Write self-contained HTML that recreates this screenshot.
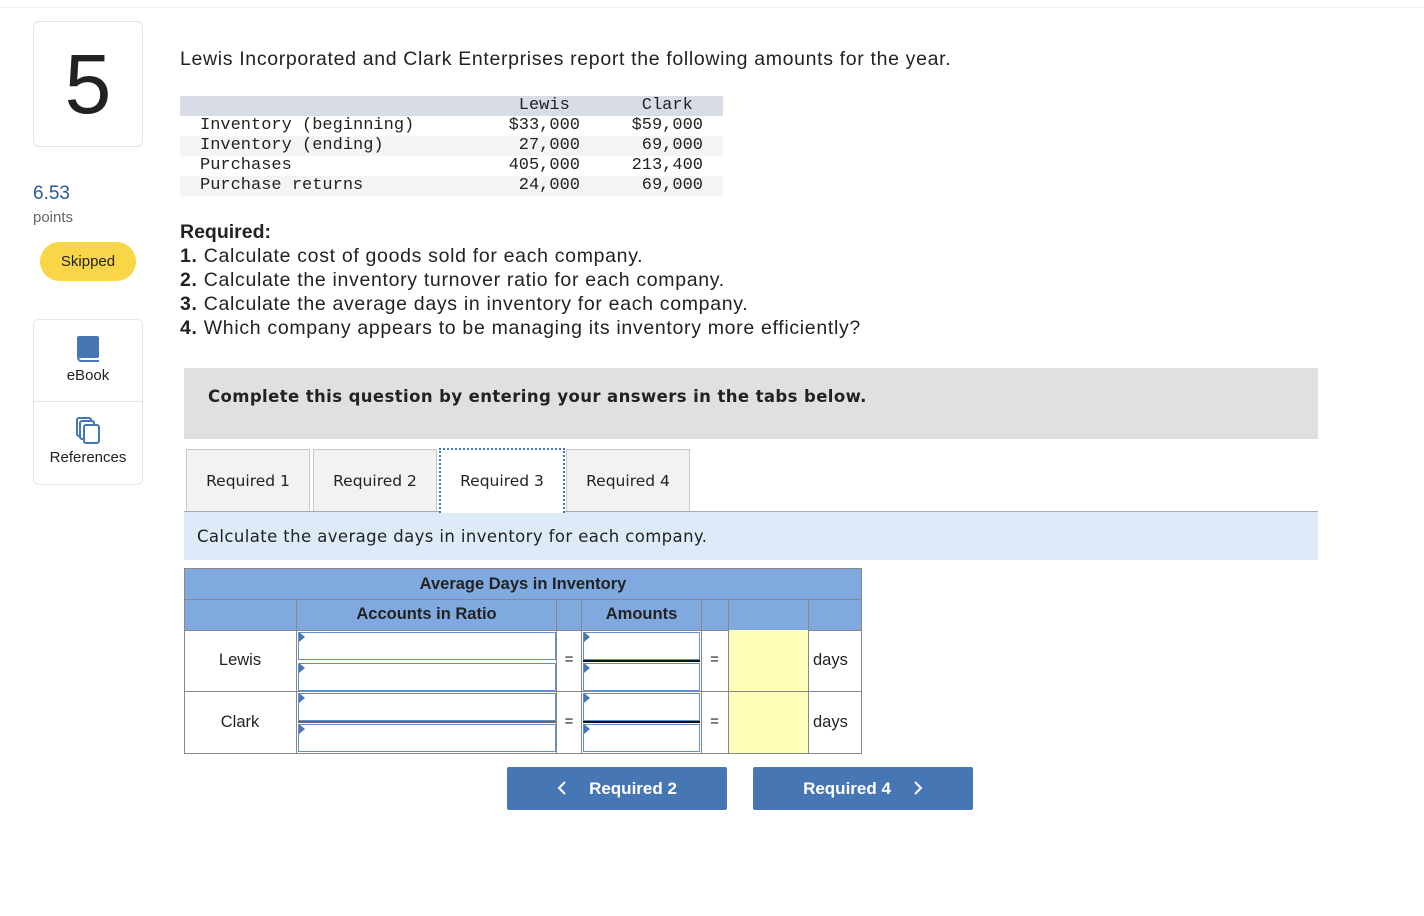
<!DOCTYPE html>
<html><head><style>
*{margin:0;padding:0;box-sizing:border-box}
body{width:1424px;height:916px;background:#fff;font-family:"Liberation Sans",Arial,sans-serif;color:#222;position:relative;overflow:hidden}
.a{position:absolute}
.mono{font-family:"Liberation Mono",monospace;font-size:17px;color:#222}
.tab{position:absolute;top:449px;height:63px;background:#f2f2f2;border:1px solid #c8c8c8;border-bottom:none;text-align:center;line-height:62px;font-family:"DejaVu Sans",sans-serif;font-size:15.5px}
.cell{position:absolute;border:1px solid #888}
.inp{position:absolute;background:#fff;border:1px solid #5f8ec8;}
.inp:before{content:"";position:absolute;left:0;top:0;border-left:6px solid #4a77b4;border-top:5px solid transparent;border-bottom:5px solid transparent;top:-1px}
.btn{position:absolute;top:767px;height:43px;width:220px;background:#4676b4;border-radius:2px;color:#fff;font-weight:bold;font-size:17px;text-align:center;line-height:43px}
.btn svg{vertical-align:middle;margin-top:-3px}
</style></head><body>
<div class="a" style="left:0;top:7px;width:1424px;height:1px;background:#eee"></div>
<div class="a" style="left:33px;top:21px;width:110px;height:126px;border:1px solid #e6e6e6;border-radius:6px;text-align:center;font-size:84px;line-height:124px;color:#222">5</div>
<div class="a" style="left:33px;top:183px;font-size:19px;color:#2a5a96">6.53</div>
<div class="a" style="left:33px;top:209px;font-size:15px;color:#666">points</div>
<div class="a" style="left:40px;top:242px;width:96px;height:39px;background:#f8d648;border-radius:20px;text-align:center;line-height:39px;font-size:15px">Skipped</div>
<div class="a" style="left:33px;top:319px;width:110px;height:166px;border:1px solid #e6e6e6;border-radius:6px"></div>
<div class="a" style="left:34px;top:401px;width:108px;height:1px;background:#e6e6e6"></div>
<svg class="a" style="left:75px;top:335px" width="26" height="28" viewBox="0 0 26 28"><rect x="2" y="1" width="22" height="22" rx="2" fill="#4676b4"/><path d="M3 22 q0 4 4 4 h17" stroke="#4676b4" stroke-width="2" fill="none"/></svg>
<div class="a" style="left:34px;top:367px;width:108px;text-align:center;font-size:15px">eBook</div>
<svg class="a" style="left:75px;top:417px" width="28" height="28" viewBox="0 0 28 28" fill="#fff" stroke="#4676b4" stroke-width="2"><rect x="2" y="1" width="14" height="18" rx="2"/><rect x="5" y="4" width="14" height="18" rx="2"/><rect x="9" y="8" width="15" height="18" rx="2"/></svg>
<div class="a" style="left:34px;top:449px;width:108px;text-align:center;font-size:15px">References</div>

<div class="a" style="left:180px;top:48px;font-size:19.5px;letter-spacing:0.66px">Lewis Incorporated and Clark Enterprises report the following amounts for the year.</div>
<div class="a" style="left:180px;top:96px;width:543px;height:20px;background:#d8dce4"></div>
<div class="a" style="left:180px;top:136px;width:543px;height:20px;background:#f4f4f4"></div>
<div class="a" style="left:180px;top:176px;width:543px;height:20px;background:#f4f4f4"></div>
<div class="a mono" style="left:200px;top:96px;line-height:20px;white-space:pre">
Inventory (beginning)
Inventory (ending)
Purchases
Purchase returns</div>
<div class="a mono" style="left:480px;top:96px;width:100px;text-align:right;line-height:20px;white-space:pre">Lewis 
$33,000
27,000
405,000
24,000</div>
<div class="a mono" style="left:603px;top:96px;width:100px;text-align:right;line-height:20px;white-space:pre">Clark 
$59,000
69,000
213,400
69,000</div>

<div class="a" style="left:180px;top:220px;font-size:19.5px;line-height:24px;letter-spacing:0.68px"><b style="letter-spacing:0">Required:</b><br><b>1.</b> Calculate cost of goods sold for each company.<br><b>2.</b> Calculate the inventory turnover ratio for each company.<br><b>3.</b> Calculate the average days in inventory for each company.<br><b>4.</b> Which company appears to be managing its inventory more efficiently?</div>

<div class="a" style="left:184px;top:368px;width:1134px;height:71px;background:#e0e0e0"></div>
<div class="a" style="left:208px;top:387px;font-family:'DejaVu Sans',sans-serif;font-weight:bold;font-size:16.5px;letter-spacing:0.4px">Complete this question by entering your answers in the tabs below.</div>

<div class="tab" style="left:186px;width:124px">Required 1</div>
<div class="tab" style="left:313px;width:124px">Required 2</div>
<div class="tab" style="left:439px;width:126px;background:#fff;border:2px dotted #4676b4;border-bottom:none;top:448px;height:65px;z-index:2">Required 3</div>
<div class="tab" style="left:566px;width:124px">Required 4</div>
<div class="a" style="left:184px;top:511px;width:1134px;height:1px;background:#aaa"></div>
<div class="a" style="left:184px;top:512px;width:1134px;height:48px;background:#ddeaf7"></div>
<div class="a" style="left:197px;top:527px;font-family:'DejaVu Sans',sans-serif;font-size:16.5px;letter-spacing:0.4px">Calculate the average days in inventory for each company.</div>

<div class="cell" style="left:184px;top:568px;width:678px;height:32px;background:#80aadf"></div>
<div class="a" style="left:184px;top:575px;width:678px;text-align:center;font-weight:bold;font-size:16.5px">Average Days in Inventory</div>
<div class="cell" style="left:184px;top:599px;width:113px;height:32px;background:#80aadf"></div>
<div class="cell" style="left:296px;top:599px;width:261px;height:32px;background:#80aadf;text-align:center;font-weight:bold;font-size:16.5px;line-height:29px">Accounts in Ratio</div>
<div class="cell" style="left:556px;top:599px;width:26px;height:32px;background:#80aadf"></div>
<div class="cell" style="left:581px;top:599px;width:121px;height:32px;background:#80aadf;text-align:center;font-weight:bold;font-size:16.5px;line-height:29px">Amounts</div>
<div class="cell" style="left:701px;top:599px;width:28px;height:32px;background:#80aadf"></div>
<div class="cell" style="left:728px;top:599px;width:81px;height:32px;background:#80aadf"></div>
<div class="cell" style="left:808px;top:599px;width:54px;height:32px;background:#80aadf"></div>

<div class="cell" style="left:184px;top:630px;width:678px;height:124px;border-color:#888"></div>
<div class="a" style="left:184px;top:691px;width:678px;height:1px;background:#888"></div>
<div class="a" style="left:296px;top:630px;width:1px;height:124px;background:#888"></div>
<div class="a" style="left:556px;top:630px;width:1px;height:124px;background:#888"></div>
<div class="a" style="left:581px;top:630px;width:1px;height:124px;background:#888"></div>
<div class="a" style="left:701px;top:630px;width:1px;height:124px;background:#888"></div>
<div class="a" style="left:728px;top:630px;width:81px;height:123px;background:#fffdb8;border-left:1px solid #888;border-right:1px solid #888"></div>
<div class="a" style="left:728px;top:691px;width:81px;height:1px;background:#888"></div>
<div class="a" style="left:184px;top:651px;width:112px;text-align:center;font-size:16.5px">Lewis</div>
<div class="a" style="left:184px;top:713px;width:112px;text-align:center;font-size:16.5px">Clark</div>
<div class="a" style="left:813px;top:651px;font-size:16.5px">days</div>
<div class="a" style="left:813px;top:713px;font-size:16.5px">days</div>
<div class="a" style="left:556px;top:651px;width:26px;text-align:center;font-size:15px">=</div>
<div class="a" style="left:701px;top:651px;width:27px;text-align:center;font-size:15px">=</div>
<div class="a" style="left:556px;top:713px;width:26px;text-align:center;font-size:15px">=</div>
<div class="a" style="left:701px;top:713px;width:27px;text-align:center;font-size:15px">=</div>

<div class="inp" style="left:298px;top:632px;width:258px;height:28px"></div>
<div class="inp" style="left:298px;top:663px;width:258px;height:28px"></div>
<div class="inp" style="left:298px;top:693px;width:258px;height:28px"></div>
<div class="inp" style="left:298px;top:724px;width:258px;height:28px"></div>
<div class="inp" style="left:583px;top:632px;width:117px;height:28px"></div>
<div class="inp" style="left:583px;top:663px;width:117px;height:28px"></div>
<div class="inp" style="left:583px;top:693px;width:117px;height:28px"></div>
<div class="inp" style="left:583px;top:724px;width:117px;height:28px"></div>
<div class="a" style="left:583px;top:660px;width:117px;height:2px;background:#111"></div>
<div class="a" style="left:583px;top:721px;width:117px;height:2px;background:#111"></div>
<div class="a" style="left:298px;top:721px;width:258px;height:2px;background:#666"></div>

<div class="btn" style="left:507px"><svg width="10" height="14" viewBox="0 0 10 14" style="margin-right:22px"><path d="M8 1 L2 7 L8 13" stroke="#fff" stroke-width="2" fill="none"/></svg>Required 2</div>
<div class="btn" style="left:753px">Required 4<svg width="10" height="14" viewBox="0 0 10 14" style="margin-left:22px"><path d="M2 1 L8 7 L2 13" stroke="#fff" stroke-width="2" fill="none"/></svg></div>
</body></html>
